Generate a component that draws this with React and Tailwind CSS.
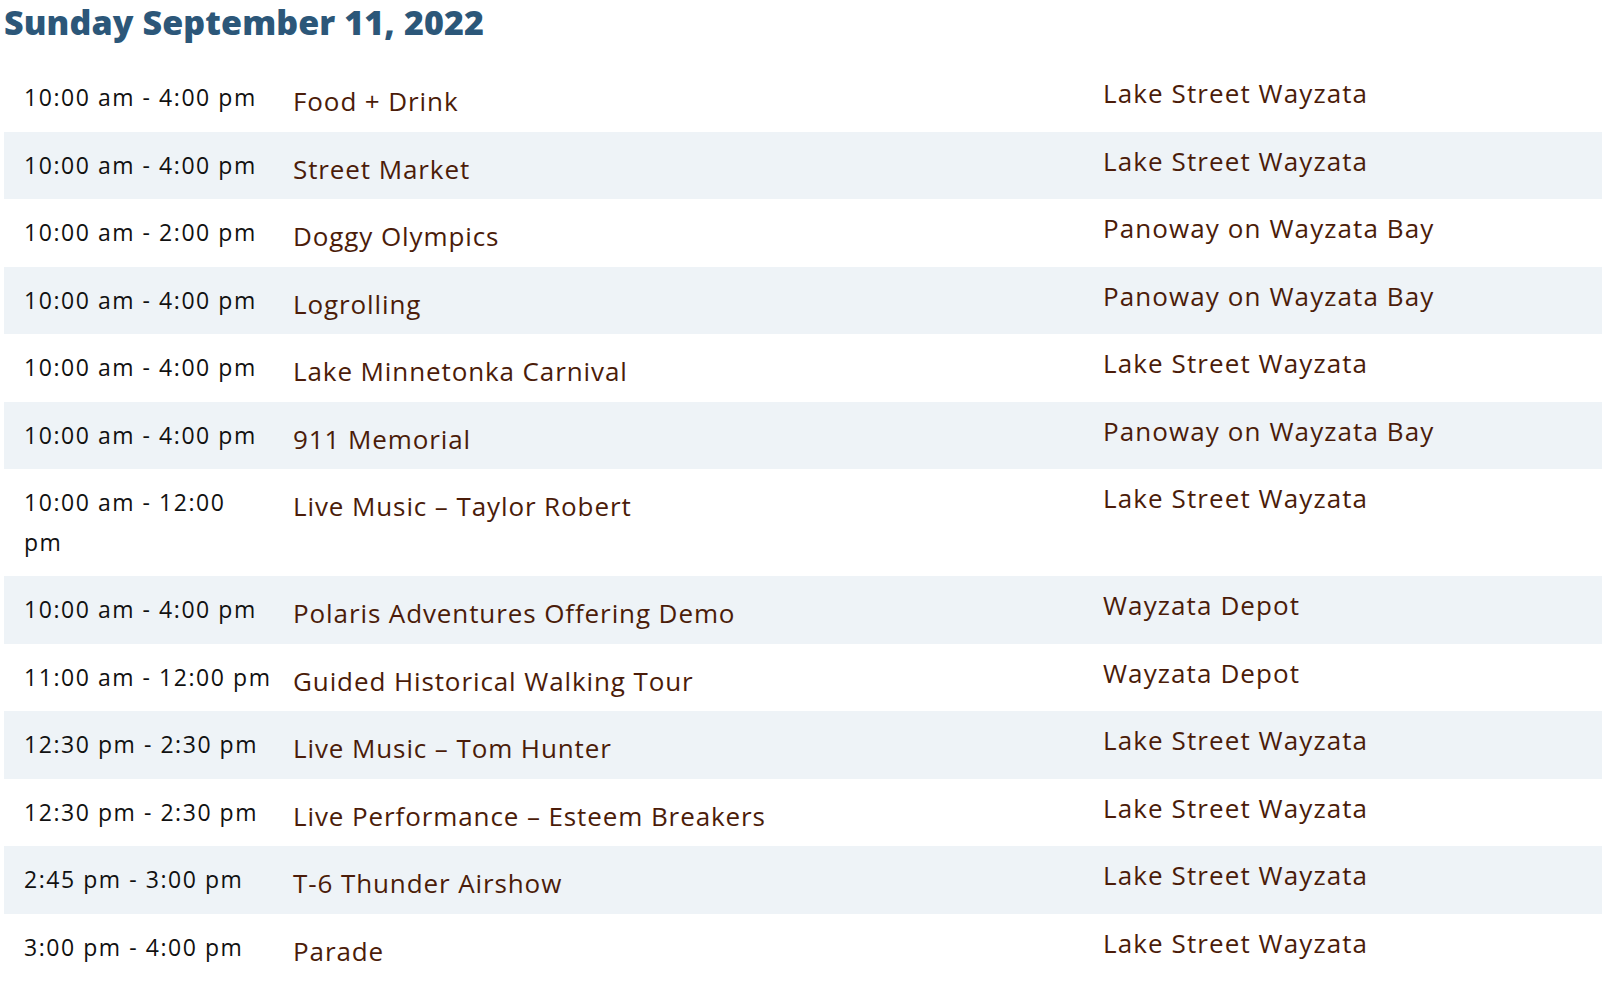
import React from "react";

const rows = [
  ["10:00 am - 4:00 pm", "Food + Drink", "Lake Street Wayzata"],
  ["10:00 am - 4:00 pm", "Street Market", "Lake Street Wayzata"],
  ["10:00 am - 2:00 pm", "Doggy Olympics", "Panoway on Wayzata Bay"],
  ["10:00 am - 4:00 pm", "Logrolling", "Panoway on Wayzata Bay"],
  ["10:00 am - 4:00 pm", "Lake Minnetonka Carnival", "Lake Street Wayzata"],
  ["10:00 am - 4:00 pm", "911 Memorial", "Panoway on Wayzata Bay"],
  ["10:00 am - 12:00|pm", "Live Music – Taylor Robert", "Lake Street Wayzata"],
  ["10:00 am - 4:00 pm", "Polaris Adventures Offering Demo", "Wayzata Depot"],
  ["11:00 am - 12:00 pm", "Guided Historical Walking Tour", "Wayzata Depot"],
  ["12:30 pm - 2:30 pm", "Live Music – Tom Hunter", "Lake Street Wayzata"],
  ["12:30 pm - 2:30 pm", "Live Performance – Esteem Breakers", "Lake Street Wayzata"],
  ["2:45 pm - 3:00 pm", "T-6 Thunder Airshow", "Lake Street Wayzata"],
  ["3:00 pm - 4:00 pm", "Parade", "Lake Street Wayzata"],
];

export default function App() {
  return (
    <div className="w-[1614px] bg-white pl-[4px] pr-[12px] font-['Open_Sans',sans-serif]">
      <h2 className="pt-[2px] text-[34px] leading-[40px] font-extrabold text-[#2c5779] tracking-[0.1px]">
        Sunday September 11, 2022
      </h2>
      <div className="mt-[22px] flex flex-col">
        {rows.map(([time, title, loc], i) => {
          const parts = time.split("|");
          return (
            <div
              key={i}
              className={`grid grid-cols-[289px_810px_1fr] ${i % 2 === 1 ? "bg-[#eef3f7]" : "bg-white"}`}
            >
              <div className="pl-[20px] pt-[14px] pb-[14px] text-[23px] leading-[39.5px] tracking-[1.55px] text-[#111] whitespace-nowrap">
                {parts[0]}
                {parts[1] && (
                  <>
                    <br />
                    {parts[1]}
                  </>
                )}
              </div>
              <div className="pt-[18px] text-[26px] leading-[39px] tracking-[0.9px] text-[#4b1c09] whitespace-nowrap">
                {title}
              </div>
              <div className="pt-[10px] text-[26px] leading-[39px] tracking-[1.1px] text-[#4b1c09] whitespace-nowrap">
                {loc}
              </div>
            </div>
          );
        })}
      </div>
    </div>
  );
}
